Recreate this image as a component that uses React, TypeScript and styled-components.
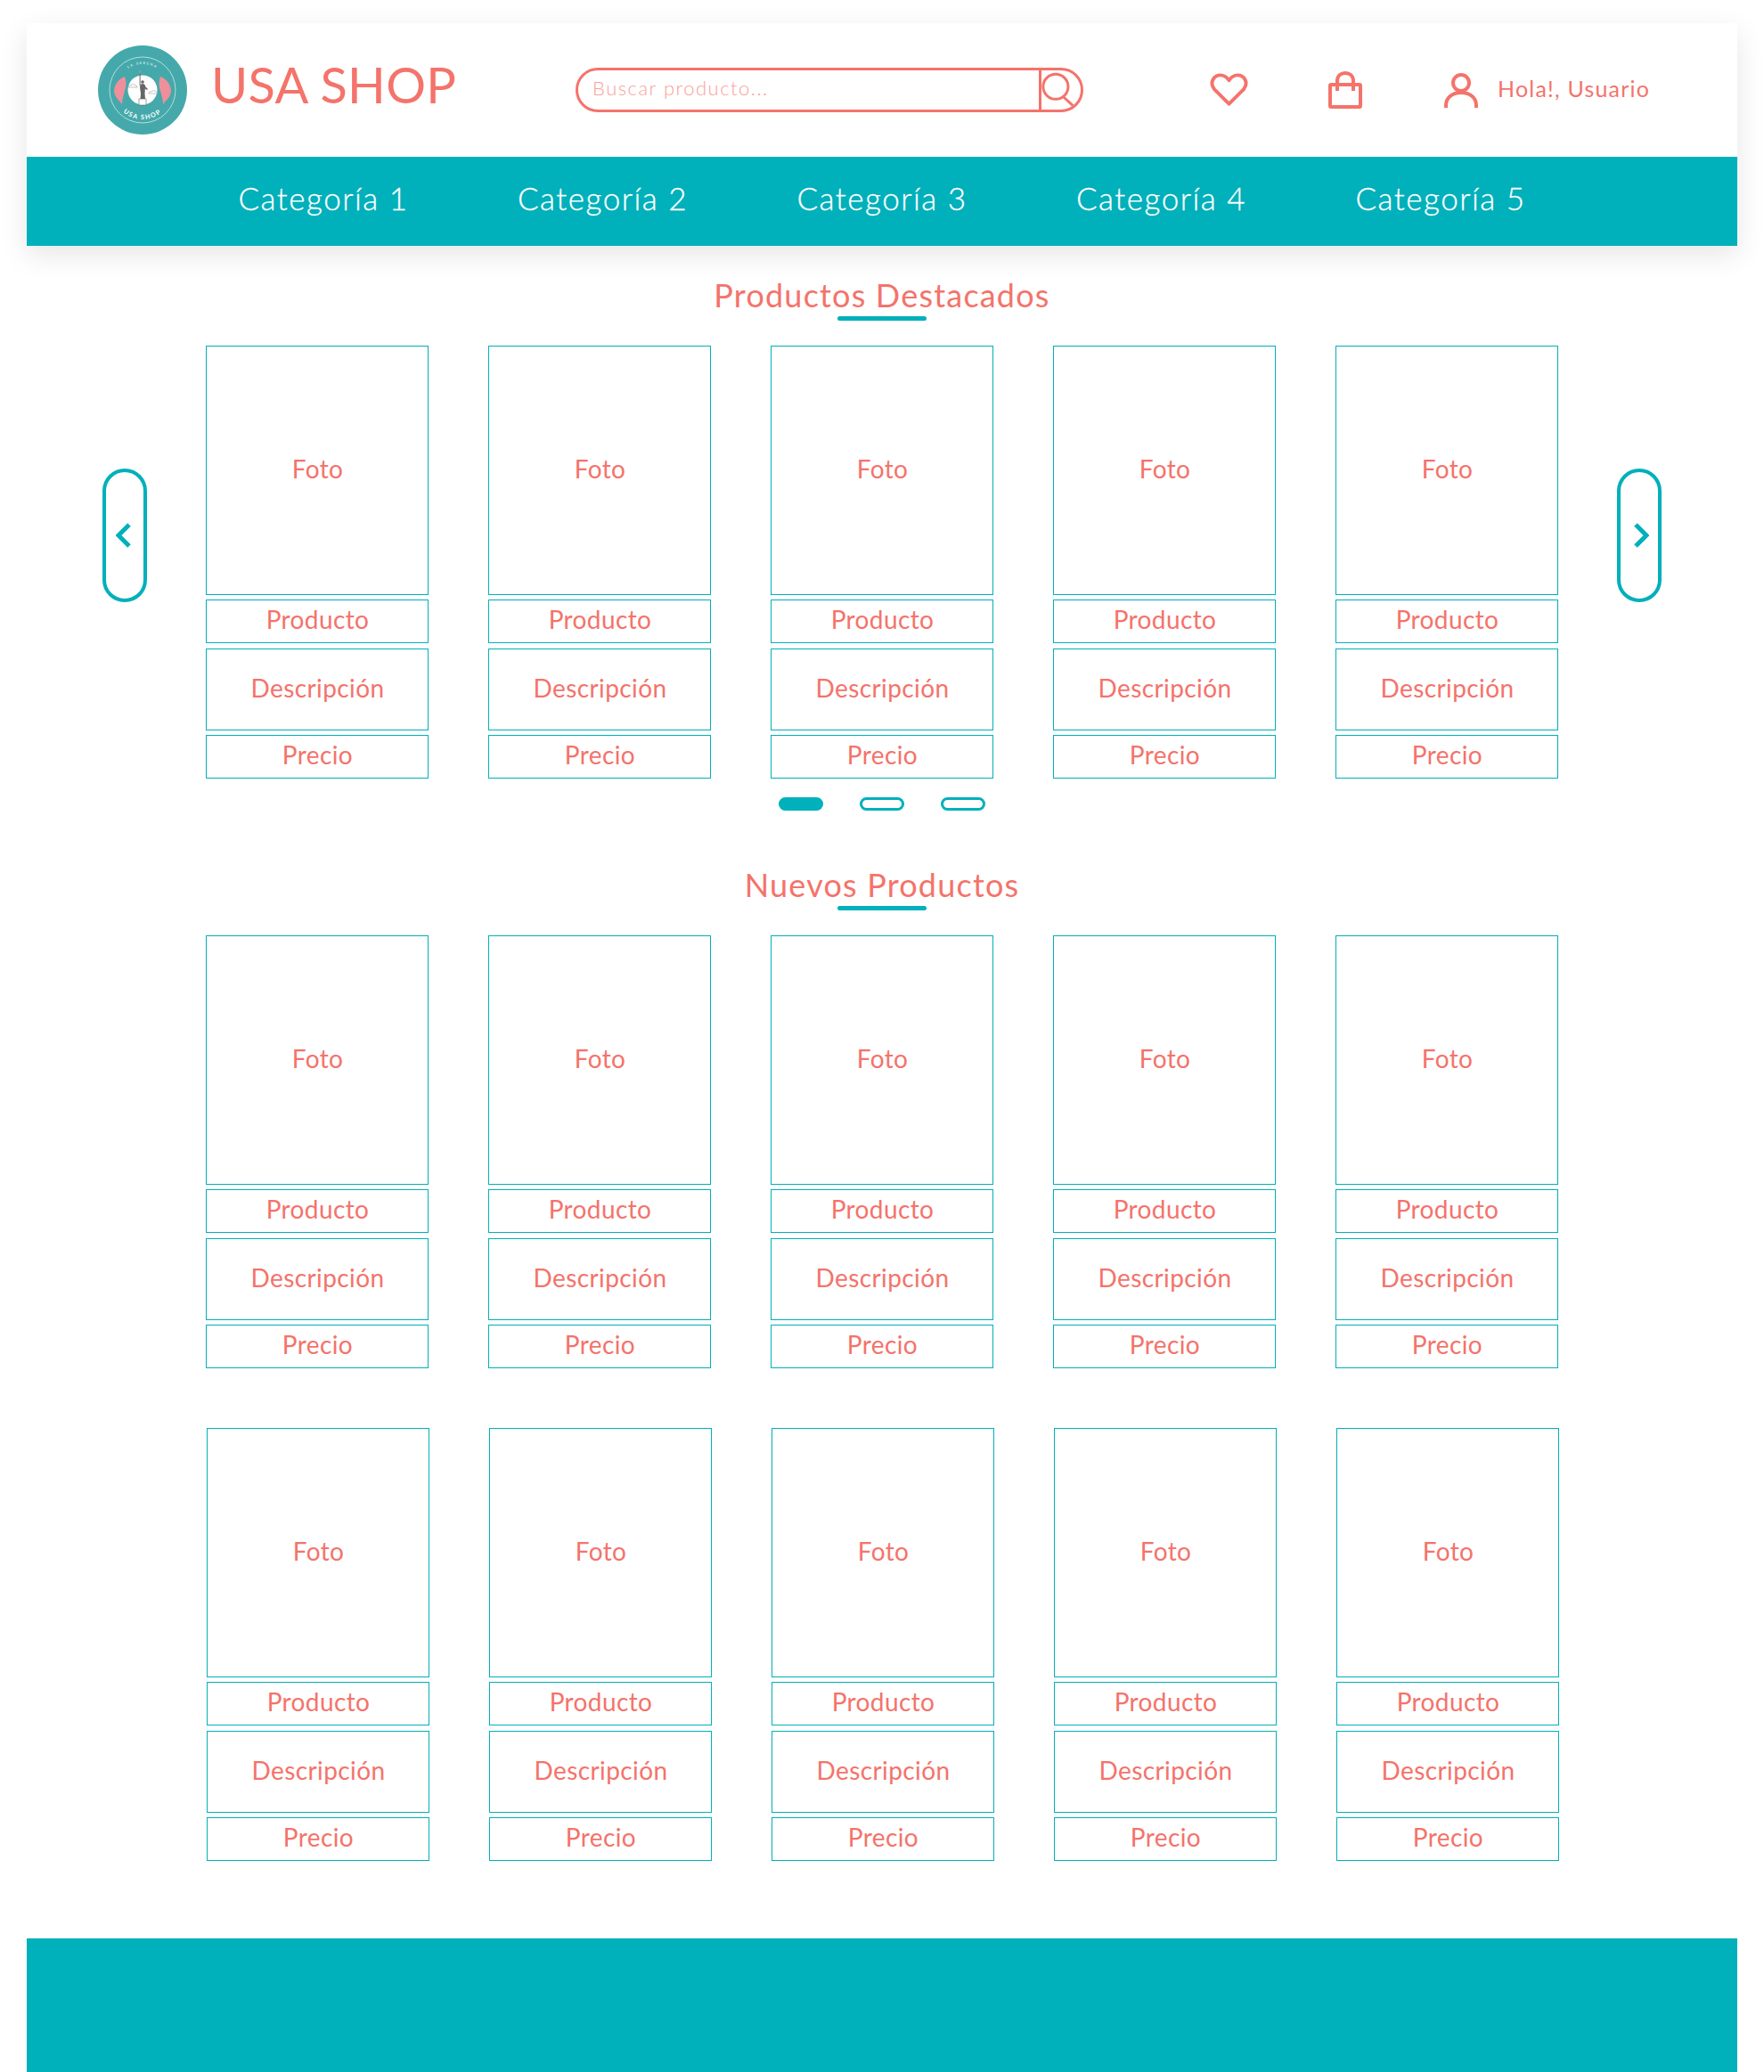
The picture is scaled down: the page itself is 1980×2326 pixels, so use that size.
import React from "react";
import styled, { createGlobalStyle } from "styled-components";

const TEAL = "#00b0ba";
const CORAL = "#f4736b";
const FONT = `"Lato", "Open Sans", sans-serif`;

const Global = createGlobalStyle`
  html, body { margin: 0; padding: 0; background: #fff; }
  * { box-sizing: border-box; }
  body { font-family: ${FONT}; color: ${CORAL}; }
`;

const Page = styled.div`
  width: 1980px;
  height: 2326px;
  padding: 26px 30px 0;
  overflow: hidden;
  display: flex;
  flex-direction: column;
`;

const TopArea = styled.header`
  box-shadow: 0 10px 30px rgba(0, 0, 0, 0.1);
  background: #fff;
`;

const Masthead = styled.div`
  height: 150px;
  display: flex;
  align-items: center;
  padding-left: 80px;
`;

const Brand = styled.div`
  width: 536px;
  display: flex;
  align-items: center;
  gap: 27px;
`;

const BrandName = styled.div`
  font-size: 56px;
  line-height: 60px;
  letter-spacing: 0.3px;
  font-weight: 400;
  padding-bottom: 13px;
  white-space: nowrap;
`;

const Search = styled.div`
  width: 570px;
  height: 50px;
  border: 3px solid ${CORAL};
  border-radius: 25px;
  display: flex;
  align-items: stretch;
  overflow: hidden;
`;

const SearchField = styled.div`
  flex: 1;
  padding: 0 0 5px 16px;
  display: flex;
  align-items: center;
  font-size: 22px;
  font-weight: 300;
  letter-spacing: 1.5px;
  color: #f9a19b;
`;

const SearchButton = styled.div`
  width: 47px;
  border-left: 3px solid ${CORAL};
  display: flex;
  align-items: flex-start;
`;

const Actions = styled.div`
  margin-left: 142px;
  display: flex;
  align-items: center;
`;

const HeartSlot = styled.div`
  width: 133px;
  display: flex;
`;

const BagSlot = styled.div`
  width: 130px;
  display: flex;
`;

const UserBlock = styled.div`
  display: flex;
  align-items: center;
  gap: 22px;
`;

const UserText = styled.span`
  font-size: 25px;
  letter-spacing: 1.2px;
  padding-bottom: 4px;
  white-space: nowrap;
`;

const Nav = styled.nav`
  height: 100px;
  background: ${TEAL};
  display: flex;
  justify-content: center;
`;

const NavItem = styled.a`
  width: 313.5px;
  text-align: center;
  color: #fff;
  font-size: 35px;
  line-height: 92px;
  font-weight: 300;
  letter-spacing: 1.5px;
  -webkit-text-stroke: 0.3px #fff;
`;

const Main = styled.main`
  flex: 1;
  display: flex;
  flex-direction: column;
`;

const Section = styled.section<{ $top: number }>`
  padding-top: ${(p) => p.$top}px;
  display: flex;
  flex-direction: column;
  align-items: center;
`;

const Title = styled.h2`
  margin: 0;
  height: 40px;
  font-size: 36px;
  line-height: 42px;
  font-weight: 400;
  letter-spacing: 1.2px;
  white-space: nowrap;
`;

const Rule = styled.div`
  width: 100px;
  height: 5px;
  margin-top: 5px;
  border-radius: 3px;
  background: ${TEAL};
`;

const Carousel = styled.div`
  width: 100%;
  margin-top: 28px;
  display: flex;
  justify-content: center;
  align-items: flex-start;
  gap: 66px;
`;

const Arrow = styled.button`
  width: 50px;
  height: 150px;
  margin-top: 138px;
  padding: 0;
  border: 4px solid ${TEAL};
  border-radius: 25px;
  background: #fff;
  display: flex;
  align-items: center;
  justify-content: center;
`;

const Cards = styled.div<{ $shift?: number }>`
  display: flex;
  gap: 67px;
  padding-left: ${(p) => p.$shift ?? 0}px;
`;

const Card = styled.article`
  width: 250px;
  display: flex;
  flex-direction: column;
`;

const Cell = styled.div<{ $h: number; $gap: number }>`
  height: ${(p) => p.$h}px;
  margin-top: ${(p) => p.$gap}px;
  border: 1px solid ${TEAL};
  display: flex;
  align-items: center;
  justify-content: center;
  font-size: 28px;
  letter-spacing: 0.4px;
  padding: 0 0 5px 1px;
`;

const Dots = styled.div`
  margin-top: 21px;
  display: flex;
  gap: 41px;
`;

const Dot = styled.span<{ $on?: boolean }>`
  width: 50px;
  height: 15px;
  border: 3px solid ${TEAL};
  border-radius: 8px;
  background: ${(p) => (p.$on ? TEAL : "#fff")};
`;

const Footer = styled.footer`
  height: 150px;
  margin-top: auto;
  background: ${TEAL};
`;

const Logo = () => (
  <svg width="100" height="100" viewBox="0 0 100 100" style={{ flex: "none" }}>
    <defs>
      <path id="arcTop" d="M21 50 A29 29 0 0 1 79 50" />
      <path id="arcBottom" d="M17 50 A33 33 0 0 0 83 50" />
    </defs>
    <circle cx="50" cy="50" r="50" fill="#45a9ab" />
    <circle cx="50" cy="50" r="37" fill="none" stroke="#fff" strokeWidth="0.6" />
    <circle cx="50" cy="50" r="16.5" fill="#fff" />
    <text fill="#fff" fontSize="3.8" fontFamily={FONT} letterSpacing="1.6" textAnchor="middle">
      <textPath href="#arcTop" startOffset="50%">LA SERENA</textPath>
    </text>
    <text fill="#fff" fontSize="7.2" fontWeight="700" fontFamily={FONT} letterSpacing="1.5" textAnchor="middle">
      <textPath href="#arcBottom" startOffset="50%">USA SHOP</textPath>
    </text>
    <g fill="#ee8f9c">
      <path d="M30 35 C22 38 18 45 18 52 C19 58 23 61 27 66 C27 60 29 56 30 51 C32 46 32 40 30 35Z" />
      <path d="M70 35 C78 38 82 45 82 52 C81 58 77 61 73 66 C73 60 71 56 70 51 C68 46 68 40 70 35Z" />
    </g>
    <g fill="#fff" stroke="#888" strokeWidth="0.5">
      <path d="M34 47 a2 2 0 0 1 3 -2 a3 3 0 0 1 5 0 a2 2 0 0 1 2 2 z" />
      <path d="M57 54 a2 2 0 0 1 3 -2 a3 3 0 0 1 5 0 a2 2 0 0 1 2 2 z" />
    </g>
    <g fill="#666">
      <rect x="46" y="60" width="8" height="7" fill="#fff" stroke="#666" strokeWidth="0.6" />
      <path d="M47.5 60 L48 54 L47 47 C47 44 48.5 43 50 43 C52 43 53.5 44 53 47 L52.5 54 L53 60 Z" />
      <rect x="46.6" y="31" width="1" height="14" />
      <rect x="46.2" y="28" width="1.8" height="3.4" fill="#999" />
      <circle cx="50" cy="41" r="1.8" />
      <path d="M53 46 L56 49 L55 50 L52 48Z" />
    </g>
  </svg>
);

const SearchIcon = () => (
  <svg width="47" height="44" viewBox="0 0 47 44" fill="none" stroke={CORAL} strokeWidth="3.2">
    <circle cx="17" cy="18" r="15" />
    <path d="M26 30 L38 41" strokeLinecap="round" />
  </svg>
);

const HeartIcon = () => (
  <svg width="43" height="40" viewBox="0 0 44 40" fill="none" stroke={CORAL} strokeWidth="4" strokeLinejoin="round">
    <path d="M22 36 L5 19 C-1 11 5 3 12 3 C17 3 20 6 22 9 C24 6 27 3 32 3 C39 3 45 11 39 19 Z" />
  </svg>
);

const BagIcon = () => (
  <svg width="38" height="42" viewBox="0 0 38 42" fill="none" stroke={CORAL} strokeWidth="4" strokeLinejoin="round">
    <rect x="2" y="15" width="34" height="25" rx="1" />
    <path d="M10 22 V11 C10 5 14 2 19 2 C24 2 28 5 28 11 V22" />
  </svg>
);

const UserIcon = () => (
  <svg width="38" height="40" viewBox="0 0 38 40" fill="none" stroke={CORAL} strokeWidth="4">
    <circle cx="19" cy="12" r="9" />
    <path d="M2 40 V37 C2 28 10 23 19 23 C28 23 36 28 36 37 V40" />
  </svg>
);

const Chevron = ({ right }: { right?: boolean }) => (
  <svg width="21" height="28" viewBox="0 0 21 28" fill="none" stroke={TEAL} strokeWidth="5">
    <path d={right ? "M6 2 L18 14 L6 26" : "M15 2 L3 14 L15 26"} />
  </svg>
);

const ProductCard = () => (
  <Card>
    <Cell $h={280} $gap={0}>Foto</Cell>
    <Cell $h={49} $gap={5}>Producto</Cell>
    <Cell $h={92} $gap={6}>Descripción</Cell>
    <Cell $h={49} $gap={5}>Precio</Cell>
  </Card>
);

const FiveCards = ({ shift }: { shift?: number }) => (
  <Cards $shift={shift}>
    {[0, 1, 2, 3, 4].map((i) => (
      <ProductCard key={i} />
    ))}
  </Cards>
);

const categories = ["Categoría 1", "Categoría 2", "Categoría 3", "Categoría 4", "Categoría 5"];

export default function App() {
  return (
    <Page>
      <Global />
      <TopArea>
        <Masthead>
          <Brand>
            <Logo />
            <BrandName>USA SHOP</BrandName>
          </Brand>
          <Search>
            <SearchField>Buscar producto...</SearchField>
            <SearchButton>
              <SearchIcon />
            </SearchButton>
          </Search>
          <Actions>
            <HeartSlot>
              <HeartIcon />
            </HeartSlot>
            <BagSlot>
              <BagIcon />
            </BagSlot>
            <UserBlock>
              <UserIcon />
              <UserText>Hola!, Usuario</UserText>
            </UserBlock>
          </Actions>
        </Masthead>
        <Nav>
          {categories.map((c) => (
            <NavItem key={c}>{c}</NavItem>
          ))}
        </Nav>
      </TopArea>
      <Main>
        <Section $top={34}>
          <Title>Productos Destacados</Title>
          <Rule />
          <Carousel>
            <Arrow>
              <Chevron />
            </Arrow>
            <FiveCards />
            <Arrow>
              <Chevron right />
            </Arrow>
          </Carousel>
          <Dots>
            <Dot $on />
            <Dot />
            <Dot />
          </Dots>
        </Section>
        <Section $top={62}>
          <Title>Nuevos Productos</Title>
          <Rule />
          <Carousel>
            <FiveCards />
          </Carousel>
        </Section>
        <Section $top={67}>
          <FiveCards shift={2} />
        </Section>
        <Footer />
      </Main>
    </Page>
  );
}
